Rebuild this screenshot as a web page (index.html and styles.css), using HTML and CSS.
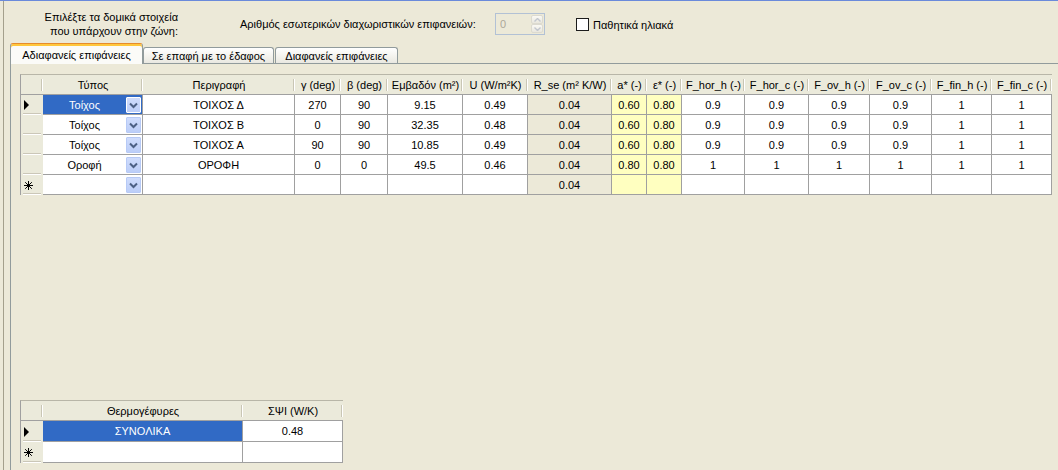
FILE: index.html
```html
<!DOCTYPE html>
<html lang="el">
<head>
<meta charset="utf-8">
<title>Δομικά στοιχεία</title>
<link rel="stylesheet" href="styles.css">
</head>
<body>
<div class="window">
  <div class="frame">
    <div class="topbar">
      <div class="pick-label">Επιλέξτε τα δομικά στοιχεία<br>που υπάρχουν στην ζώνη:</div>
      <div class="count-label">Αριθμός εσωτερικών διαχωριστικών επιφανειών:</div>
      <div class="spin">
        <span class="spin-val">0</span>
        <span class="spin-btns">
          <span class="spin-btn"><svg width="7" height="4" viewBox="0 0 7 4"><polyline points="0.5,3.5 3.5,0.5 6.5,3.5" fill="none" stroke="#C2C6CE" stroke-width="1.4"/></svg></span>
          <span class="spin-btn"><svg width="7" height="4" viewBox="0 0 7 4"><polyline points="0.5,0.5 3.5,3.5 6.5,0.5" fill="none" stroke="#C2C6CE" stroke-width="1.4"/></svg></span>
        </span>
      </div>
      <div class="check"><span class="box"></span><span>Παθητικά ηλιακά</span></div>
    </div>

    <div class="tabs">
      <div class="tab active">Αδιαφανείς επιφάνειες</div>
      <div class="tab t2">Σε επαφή με το έδαφος</div>
      <div class="tab t3">Διαφανείς επιφάνειες</div>
    </div>

    <div class="panel">
      <div class="dgv main">
        <div class="hd"></div>
        <div class="hd">Τύπος</div>
        <div class="hd">Περιγραφή</div>
        <div class="hd">γ (deg)</div>
        <div class="hd">β (deg)</div>
        <div class="hd">Εμβαδόν (m²)</div>
        <div class="hd">U (W/m²K)</div>
        <div class="hd">R_se (m² K/W)</div>
        <div class="hd">a* (-)</div>
        <div class="hd">ε* (-)</div>
        <div class="hd">F_hor_h (-)</div>
        <div class="hd">F_hor_c (-)</div>
        <div class="hd">F_ov_h (-)</div>
        <div class="hd">F_ov_c (-)</div>
        <div class="hd">F_fin_h (-)</div>
        <div class="hd">F_fin_c (-)</div>

        <div class="rh"><svg width="6" height="10" viewBox="0 0 6 10"><polygon points="0,0 5,5 0,10" fill="#000"/></svg></div>
        <div class="c sel combo"><span class="txt">Τοίχος</span><span class="dd focus"><svg width="13" height="14" viewBox="0 0 13 14"><polyline points="3,5.5 6.5,9 10,5.5" fill="none" stroke="#4D6185" stroke-width="2"/></svg></span></div>
        <div class="c">ΤΟΙΧΟΣ Δ</div>
        <div class="c">270</div>
        <div class="c">90</div>
        <div class="c">9.15</div>
        <div class="c">0.49</div>
        <div class="c ro">0.04</div>
        <div class="c yl">0.60</div>
        <div class="c yl">0.80</div>
        <div class="c">0.9</div>
        <div class="c">0.9</div>
        <div class="c">0.9</div>
        <div class="c">0.9</div>
        <div class="c">1</div>
        <div class="c">1</div>

        <div class="rh"></div>
        <div class="c combo"><span class="txt">Τοίχος</span><span class="dd"><svg width="13" height="14" viewBox="0 0 13 14"><polyline points="3,5.5 6.5,9 10,5.5" fill="none" stroke="#4D6185" stroke-width="2"/></svg></span></div>
        <div class="c">ΤΟΙΧΟΣ Β</div>
        <div class="c">0</div>
        <div class="c">90</div>
        <div class="c">32.35</div>
        <div class="c">0.48</div>
        <div class="c ro">0.04</div>
        <div class="c yl">0.60</div>
        <div class="c yl">0.80</div>
        <div class="c">0.9</div>
        <div class="c">0.9</div>
        <div class="c">0.9</div>
        <div class="c">0.9</div>
        <div class="c">1</div>
        <div class="c">1</div>

        <div class="rh"></div>
        <div class="c combo"><span class="txt">Τοίχος</span><span class="dd"><svg width="13" height="14" viewBox="0 0 13 14"><polyline points="3,5.5 6.5,9 10,5.5" fill="none" stroke="#4D6185" stroke-width="2"/></svg></span></div>
        <div class="c">ΤΟΙΧΟΣ Α</div>
        <div class="c">90</div>
        <div class="c">90</div>
        <div class="c">10.85</div>
        <div class="c">0.49</div>
        <div class="c ro">0.04</div>
        <div class="c yl">0.60</div>
        <div class="c yl">0.80</div>
        <div class="c">0.9</div>
        <div class="c">0.9</div>
        <div class="c">0.9</div>
        <div class="c">0.9</div>
        <div class="c">1</div>
        <div class="c">1</div>

        <div class="rh"></div>
        <div class="c combo"><span class="txt">Οροφή</span><span class="dd"><svg width="13" height="14" viewBox="0 0 13 14"><polyline points="3,5.5 6.5,9 10,5.5" fill="none" stroke="#4D6185" stroke-width="2"/></svg></span></div>
        <div class="c">ΟΡΟΦΗ</div>
        <div class="c">0</div>
        <div class="c">0</div>
        <div class="c">49.5</div>
        <div class="c">0.46</div>
        <div class="c ro">0.04</div>
        <div class="c yl">0.80</div>
        <div class="c yl">0.80</div>
        <div class="c">1</div>
        <div class="c">1</div>
        <div class="c">1</div>
        <div class="c">1</div>
        <div class="c">1</div>
        <div class="c">1</div>

        <div class="rh"><svg width="9" height="9" viewBox="0 0 9 9"><g stroke="#000" stroke-width="1"><line x1="4.5" y1="0" x2="4.5" y2="9"/><line x1="0" y1="4.5" x2="9" y2="4.5"/><line x1="1.2" y1="1.2" x2="7.8" y2="7.8"/><line x1="7.8" y1="1.2" x2="1.2" y2="7.8"/></g></svg></div>
        <div class="c combo"><span class="txt"></span><span class="dd"><svg width="13" height="14" viewBox="0 0 13 14"><polyline points="3,5.5 6.5,9 10,5.5" fill="none" stroke="#4D6185" stroke-width="2"/></svg></span></div>
        <div class="c"></div>
        <div class="c"></div>
        <div class="c"></div>
        <div class="c"></div>
        <div class="c"></div>
        <div class="c ro">0.04</div>
        <div class="c yl"></div>
        <div class="c yl"></div>
        <div class="c"></div>
        <div class="c"></div>
        <div class="c"></div>
        <div class="c"></div>
        <div class="c"></div>
        <div class="c"></div>
      </div>

      <div class="dgv bridges">
        <div class="hd"></div>
        <div class="hd">Θερμογέφυρες</div>
        <div class="hd">ΣΨΙ (W/K)</div>

        <div class="rh"><svg width="6" height="10" viewBox="0 0 6 10"><polygon points="0,0 5,5 0,10" fill="#000"/></svg></div>
        <div class="c sel">ΣΥΝΟΛΙΚΑ</div>
        <div class="c">0.48</div>

        <div class="rh"><svg width="9" height="9" viewBox="0 0 9 9"><g stroke="#000" stroke-width="1"><line x1="4.5" y1="0" x2="4.5" y2="9"/><line x1="0" y1="4.5" x2="9" y2="4.5"/><line x1="1.2" y1="1.2" x2="7.8" y2="7.8"/><line x1="7.8" y1="1.2" x2="1.2" y2="7.8"/></g></svg></div>
        <div class="c"></div>
        <div class="c"></div>
      </div>
    </div>
  </div>
</div>
</body>
</html>
```

FILE: styles.css
```css
* { box-sizing: border-box; }

html, body {
  margin: 0;
  padding: 0;
}

body {
  width: 1058px;
  height: 470px;
  overflow: hidden;
  background: #ECE9D8;
  font-family: "Liberation Sans", Arial, sans-serif;
  font-size: 11px;
  color: #000;
}

.window {
  height: 470px;
  border-top: 1px solid #6A8ADB;
}

.frame {
  margin-left: 3px;
  height: 469px;
  border-left: 1px solid #A4A08C;
}

/* ---------- top bar ---------- */
.topbar {
  display: flex;
  align-items: center;
  height: 42px;
  padding-top: 4px;
  white-space: nowrap;
}

.pick-label {
  width: 174px;
  text-align: right;
  line-height: 14px;
}

.count-label {
  margin-left: 62px;
  width: 245px;
}

.spin {
  margin-left: 10px;
  width: 50px;
  height: 22px;
  border: 1px solid #B2C1D5;
  display: flex;
  align-items: center;
  padding: 1px 1px 1px 4px;
}

.spin-val {
  flex: 1;
  color: #ACA899;
}

.spin-btns {
  width: 12px;
  height: 18px;
  display: flex;
  flex-direction: column;
}

.spin-btn {
  flex: 1;
  display: flex;
  align-items: center;
  justify-content: center;
  border: 1px solid #DCDAD0;
  border-radius: 2px;
  background: linear-gradient(#FAF9F5, #E9E7DE);
}

.check {
  margin-left: 31px;
  margin-top: 1px;
  display: flex;
  align-items: center;
  gap: 4px;
}

.check .box {
  width: 13px;
  height: 13px;
  border: 1px solid #1C1C1C;
  background: #fff;
}

/* ---------- tabs ---------- */
.tabs {
  display: flex;
  align-items: flex-end;
  height: 20px;
  margin-left: 6px;
}

.tab {
  height: 16px;
  display: flex;
  align-items: center;
  justify-content: center;
  border: 1px solid #919B9C;
  border-bottom: none;
  border-radius: 3px 3px 0 0;
  background: linear-gradient(#FFFFFF, #F3F2EC 60%, #E9E8E1);
  white-space: nowrap;
}

.tab.active {
  width: 133px;
  height: 21px;
  margin-bottom: -1px;
  position: relative;
  z-index: 1;
  border-top: 1px solid #E68B2C;
  box-shadow: inset 0 2px 0 #FFC73C;
  background: #FBFBF8;
  padding-top: 1px;
}

.tab.t2 { width: 131px; }
.tab.t3 { width: 123px; margin-left: 1px; }

/* ---------- panel ---------- */
.panel {
  margin-left: 6px;
  width: 1100px;
  height: 407px;
  border-top: 1px solid #919B9C;
  border-left: 1px solid #919B9C;
  padding: 10px 0 0 9px;
}

/* ---------- data grids ---------- */
.dgv {
  display: grid;
  width: max-content;
  border-left: 1px solid #A0A0A0;
  border-top: 1px solid #B8B6A8;
  grid-auto-rows: 20px;
}

.dgv.main {
  grid-template-columns: 22px 100px 152px 46px 47px 75px 65px 84px 35px 35px 63px 64px 61px 62px 60px 60px;
}

.dgv.bridges {
  margin-top: 205px;
  grid-template-columns: 22px 200px 100px;
  grid-template-rows: 20px 21px 21px;
}

.hd {
  display: flex;
  align-items: center;
  justify-content: center;
  white-space: nowrap;
  border-bottom: 1px solid #A0A0A0;
  background:
    linear-gradient(#C9C6B5, #C9C6B5) no-repeat right 1px top 4px / 1px 12px,
    linear-gradient(#FFFFFF, #FFFFFF) no-repeat right 0 top 4px / 1px 12px,
    #EBEADB;
}

.rh {
  display: flex;
  align-items: center;
  padding-left: 3px;
  background:
    linear-gradient(#CBC7B8, #CBC7B8) no-repeat left 2px bottom 1px / 18px 1px,
    linear-gradient(#FFFFFF, #FFFFFF) no-repeat left 2px bottom 0 / 18px 1px,
    #EBEADB;
}

.c {
  display: flex;
  align-items: center;
  justify-content: center;
  white-space: nowrap;
  background: #fff;
  border-right: 1px solid #A0A0A0;
  border-bottom: 1px solid #A0A0A0;
}

.c.ro { background: #ECE9D8; }
.c.yl { background: #FFFFC0; }
.c.sel { background: #316AC5; color: #fff; }

.combo {
  justify-content: flex-start;
  padding-right: 1px;
}

.combo .txt {
  flex: 1;
  text-align: center;
}

.dd {
  width: 15px;
  height: 16px;
  display: flex;
  align-items: center;
  justify-content: center;
  border: 1px solid #B7CAF6;
  border-radius: 1px;
  background: linear-gradient(#CFDCFC, #BCCEF8);
}

.dd.focus {
  border-color: #FFFFFF;
}
```
